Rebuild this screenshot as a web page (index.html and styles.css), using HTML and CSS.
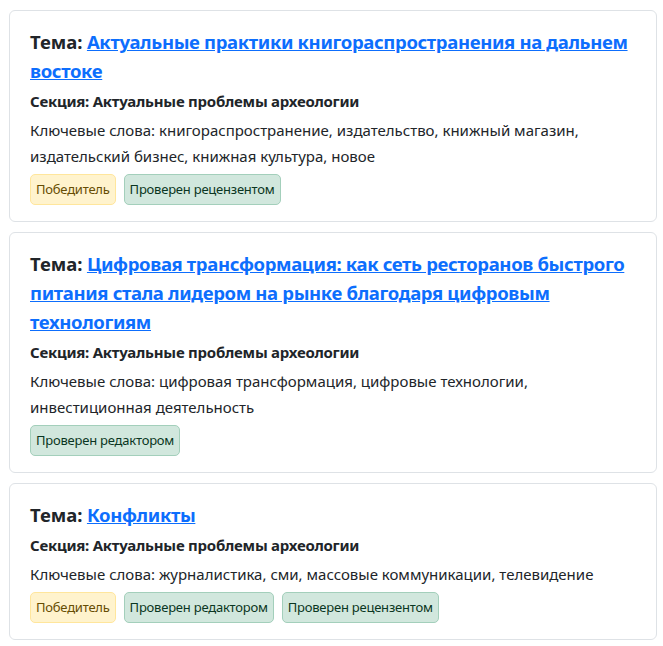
FILE: index.html
```html
<!DOCTYPE html>
<html lang="ru">
<head>
<meta charset="utf-8">
<title>Темы</title>
<link rel="stylesheet" href="styles.css">
</head>
<body>
<div class="list">
  <div class="card">
    <h2 class="title"><span class="label">Тема:</span> <a href="#">Актуальные практики книгораспространения на дальнем востоке</a></h2>
    <p class="section">Секция: Актуальные проблемы археологии</p>
    <p class="keywords">Ключевые слова: книгораспространение, издательство, книжный магазин, издательский бизнес, книжная культура, новое</p>
    <div class="badges">
      <span class="badge badge-win">Победитель</span>
      <span class="badge badge-ok">Проверен рецензентом</span>
    </div>
  </div>
  <div class="card">
    <h2 class="title"><span class="label">Тема:</span> <a href="#">Цифровая трансформация: как сеть ресторанов быстрого питания стала лидером на рынке благодаря цифровым технологиям</a></h2>
    <p class="section">Секция: Актуальные проблемы археологии</p>
    <p class="keywords">Ключевые слова: цифровая трансформация, цифровые технологии, инвестиционная деятельность</p>
    <div class="badges">
      <span class="badge badge-ok">Проверен редактором</span>
    </div>
  </div>
  <div class="card">
    <h2 class="title"><span class="label">Тема:</span> <a href="#">Конфликты</a></h2>
    <p class="section">Секция: Актуальные проблемы археологии</p>
    <p class="keywords">Ключевые слова: журналистика, сми, массовые коммуникации, телевидение</p>
    <div class="badges">
      <span class="badge badge-win">Победитель</span>
      <span class="badge badge-ok">Проверен редактором</span>
      <span class="badge badge-ok">Проверен рецензентом</span>
    </div>
  </div>
</div>
</body>
</html>
```
FILE: styles.css
```css
* { box-sizing: border-box; }
body {
  margin: 0;
  font-family: "Noto Sans", "Open Sans", sans-serif;
  color: #212529;
  background: #fff;
}
.list {
  display: flex;
  flex-direction: column;
  gap: 10px;
  padding: 10px 6px 0 9px;
}
.card {
  border: 1px solid #dee2e6;
  border-radius: 6px;
  padding: 16px 20px 16px 20px;
}
.title {
  margin: 0 0 4px 0;
  font-size: 18.5px;
  font-weight: 700;
  line-height: 29px;
  letter-spacing: -0.35px;
}
.title .label {
  letter-spacing: 0;
}
.title a {
  color: #0d6efd;
  text-decoration: underline;
}
.section {
  margin: 0 0 4px 0;
  font-size: 15px;
  font-weight: 700;
  line-height: 24px;
  letter-spacing: -0.25px;
}
.keywords {
  margin: 0 0 5px 0;
  font-size: 15px;
  line-height: 26px;
}
.badges {
  display: flex;
  flex-wrap: wrap;
  gap: 8px;
}
.badge {
  display: inline-block;
  font-size: 13px;
  line-height: 19px;
  padding: 5px 5px;
  border: 1px solid;
  border-radius: 5px;
  letter-spacing: -0.22px;
}
.badge-win {
  background: #fff3cd;
  border-color: #ffe69c;
  color: #664d03;
}
.badge-ok {
  background: #d1e7dd;
  border-color: #a3cfbb;
  color: #0a3622;
}
```
